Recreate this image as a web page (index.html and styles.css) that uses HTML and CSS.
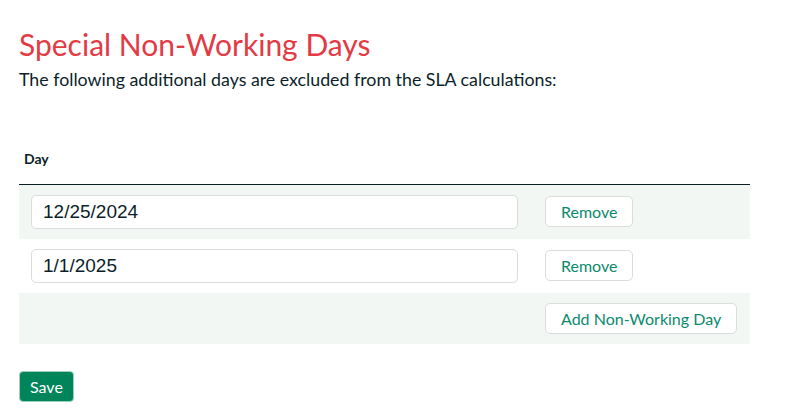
FILE: index.html
```html
<!DOCTYPE html>
<html lang="en">
<head>
<meta charset="utf-8">
<title>Special Non-Working Days</title>
<link rel="stylesheet" href="styles.css">
</head>
<body>
<main class="page">
  <h1 class="title">Special Non-Working Days</h1>
  <p class="lead">The following additional days are excluded from the SLA calculations:</p>
  <table class="days">
    <thead>
      <tr><th class="col-day">Day</th><th class="col-act"></th></tr>
    </thead>
    <tbody>
      <tr class="alt">
        <td><input class="date-input" type="text" value="12/25/2024"></td>
        <td><button class="btn" type="button">Remove</button></td>
      </tr>
      <tr>
        <td><input class="date-input" type="text" value="1/1/2025"></td>
        <td><button class="btn" type="button">Remove</button></td>
      </tr>
      <tr class="alt add-row">
        <td></td>
        <td><button class="btn" type="button">Add Non-Working Day</button></td>
      </tr>
    </tbody>
  </table>
  <button class="btn-primary" type="button">Save</button>
</main>
</body>
</html>
```
FILE: styles.css
```css
* { box-sizing: border-box; }
html, body { margin: 0; padding: 0; background: #fff; }
body { font-family: Lato, "Open Sans", sans-serif; color: #0b1e29; }
.page { padding: 0 19px; width: 750px; }
.title {
  margin: 0;
  padding-top: 26px;
  font-size: 30px;
  font-weight: 400;
  line-height: 36px;
  color: #e23b45;
}
.lead {
  margin: 6px 0 0 0;
  font-size: 17.8px;
  line-height: 22px;
}
.days {
  margin-top: 48px;
  width: 731px;
  border-collapse: collapse;
}
.days th {
  text-align: left;
  font-size: 14px;
  font-weight: 700;
  padding: 0 5px 17px 5px;
  height: 46px;
  vertical-align: bottom;
  border-bottom: 1px solid #0b1f26;
}
.days td { padding: 10px 12px; height: 54px; vertical-align: middle; }
.days td:first-child { width: 513px; }
.days td:last-child { padding-left: 13px; }
.days tr.alt td { background: #f3f7f4; }
.days tr.add-row td { height: 51px; }
.date-input {
  display: block;
  width: 487px;
  height: 34px;
  border: 1px solid #dcdcdc;
  border-radius: 5px;
  background: #fff;
  padding: 0 11px;
  font-family: "Liberation Sans", Arial, sans-serif;
  font-size: 19px;
  color: #0b1e29;
}
.btn {
  height: 31px;
  padding: 0 15px;
  border: 1px solid #dcdcdc;
  border-radius: 5px;
  background: #fff;
  color: #0b8a6e;
  font-family: Lato, sans-serif;
  font-size: 16px;
  line-height: 29px;
}
.btn-primary {
  margin-top: 27px;
  height: 31px;
  padding: 0 10px;
  border: 1px solid #9fd0bd;
  border-radius: 4px;
  background: #00855a;
  color: #fff;
  font-family: Lato, sans-serif;
  font-size: 16px;
  line-height: 29px;
}
```
